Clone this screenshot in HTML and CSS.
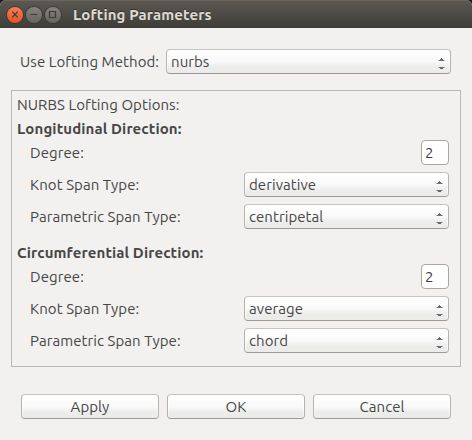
FILE: index.html
```
<!DOCTYPE html>
<html lang="en">
<head>
<meta charset="utf-8">
<title>Lofting Parameters</title>
<link rel="stylesheet" href="styles.css">
</head>
<body>
<svg class="defs" width="0" height="0" aria-hidden="true">
  <symbol id="arrows" viewBox="0 0 7 13"><path d="M3 1h1v1h1v1h1v1H1V3h1V2h1zM1 10h5v1H5v1H2v-1H1z" fill="#666"/><path d="M0 3h7v1H0zM0 10h7v1H0z" fill="#777" opacity=".45"/></symbol>
</svg>
<div class="window">
  <header class="titlebar">
    <span class="control close"><svg viewBox="0 0 16 16"><path d="M5.2 4.7l5.6 5.6M10.8 4.7l-5.6 5.6"/></svg></span>
    <span class="control"><svg viewBox="0 0 16 16"><path d="M4.5 7.5h7"/></svg></span>
    <span class="control"><svg viewBox="0 0 16 16"><path d="M4.5 4.5h6v6h-6z"/></svg></span>
    <h1 class="title">Lofting Parameters</h1>
  </header>
  <main class="content">
    <div class="method">
      <span class="method-label">Use Lofting Method:</span>
      <div class="select"><span>nurbs</span><svg class="arrows"><use href="#arrows"/></svg></div>
    </div>
    <section class="options">
      <div class="heading">NURBS Lofting Options:</div>
      <div class="heading bold">Longitudinal Direction:</div>
      <div class="rows">
        <div class="row"><span>Degree:</span><div class="input">2</div></div>
        <div class="row"><span>Knot Span Type:</span><div class="select"><span>derivative</span><svg class="arrows"><use href="#arrows"/></svg></div></div>
        <div class="row"><span>Parametric Span Type:</span><div class="select"><span>centripetal</span><svg class="arrows"><use href="#arrows"/></svg></div></div>
      </div>
      <div class="heading bold second">Circumferential Direction:</div>
      <div class="rows">
        <div class="row"><span>Degree:</span><div class="input">2</div></div>
        <div class="row"><span>Knot Span Type:</span><div class="select"><span>average</span><svg class="arrows"><use href="#arrows"/></svg></div></div>
        <div class="row"><span>Parametric Span Type:</span><div class="select"><span>chord</span><svg class="arrows"><use href="#arrows"/></svg></div></div>
      </div>
    </section>
    <footer class="buttons">
      <div class="button">Apply</div>
      <div class="button">OK</div>
      <div class="button">Cancel</div>
    </footer>
  </main>
</div>
</body>
</html>
```
FILE: styles.css
```
* { box-sizing: border-box; }
body {
  margin: 0;
  background: #1c1b18;
  color: #464646;
  font: 15px/25px Ubuntu, "Noto Sans", sans-serif;
  letter-spacing: .07px;
  white-space: nowrap;
}
.defs { display: none; }
.window { width: 472px; height: 440px; background: #f2f1f0; border-radius: 6px 6px 0 0; overflow: hidden; }
.titlebar {
  display: flex;
  align-items: center;
  gap: 3px;
  height: 28px;
  padding: 1px 0 0 7px;
  background: linear-gradient(#5c5952, #504e48 40%, #3d3c37);
  box-shadow: inset 0 1px #69665d;
}
.control {
  display: flex;
  width: 16px;
  height: 16px;
  border-radius: 50%;
  background: linear-gradient(#85837b, #66645e);
  box-shadow: 0 0 0 1px #3b3a35;
}
.control.close { background: linear-gradient(#f58059, #e4511e); }
.control svg { width: 16px; height: 16px; fill: none; stroke: #3a3935; stroke-width: 1.2; }
.title {
  margin: 0 0 0 9px;
  font-size: 15px;
  line-height: 26px;
  color: #dfdbd2;
  text-shadow: 0 -1px #33322e;
  letter-spacing: .12px;
}
.content { padding: 21px 11px 0; }
.method { display: flex; gap: 7px; padding: 0 10px 0 9px; }
.method-label { width: 139px; }
.method .select { flex: 1; }
.select {
  display: flex;
  justify-content: space-between;
  height: 25px;
  padding: 0 5px 0 4px;
  line-height: 23px;
}
.select, .button {
  border: 1px solid #b5b3af;
  border-top-color: #c6c4c0;
  border-bottom-color: #9c9a96;
  border-radius: 4px;
  background: linear-gradient(#fff, #f9f9f9 50%, #ececeb 75%, #ebebea);
  box-shadow: inset 1px 0 #fff9, inset -1px 0 #fff9;
}
.arrows { width: 7px; height: 13px; margin-top: 7px; }
.options { height: 277px; margin-top: 16px; padding: 1px 11px 0 5px; border: 1px solid #bbb9b5; }
.heading { height: 24px; }
.bold { font-weight: 700; letter-spacing: .12px; }
.rows { display: grid; gap: 7px; padding-left: 13px; }
.row { display: flex; justify-content: space-between; height: 25px; }
.row .select { width: 205px; }
.input {
  width: 28px;
  height: 25px;
  padding-left: 3px;
  border: 1px solid #a9a7a3;
  border-radius: 4px;
  background: #fff;
  line-height: 23px;
  color: #3c3c3c;
}
.second { margin-top: 11px; }
.buttons { display: flex; gap: 8px; padding: 27px 10px 0; }
.button { flex: 1; height: 25px; line-height: 23px; text-align: center; }
```
